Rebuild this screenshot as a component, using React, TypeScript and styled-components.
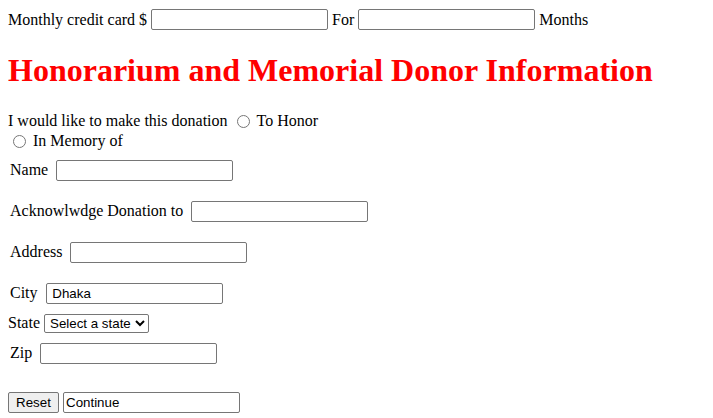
import React from 'react'
import styled, { createGlobalStyle } from 'styled-components'

const GlobalStyle = createGlobalStyle`
  body {
    margin: 8px;
    font-family: "Liberation Serif", "Times New Roman", serif;
    font-size: 16px;
    color: #000;
    background: #fff;
  }
`

// prvy riadok s kartou
const TopLine = styled.div`
  display: flex;
  align-items: center;
  height: 23px;
  gap: 4px;
  white-space: nowrap;
`

const Title = styled.h1`
  margin: 21.44px 0;
  font-size: 32px;
  font-weight: bold;
  color: #ff0000;
  line-height: 37px;
`

const RadioBlock = styled.div`
  line-height: 20px;
`

const RadioLine = styled.div`
  display: flex;
  align-items: center;
  height: 20px;
  white-space: nowrap;
`

interface RadioProps {
  $left: number;
}

const Radio = styled.input.attrs({ type: 'radio' })<RadioProps>`
  width: 13px;
  height: 13px;
  margin: 1px 7px 0 ${p => p.$left}px;
  accent-color: #767676;
`

interface FieldProps {
  $top: number;
  $indent?: number;
  $gap?: number;
}

const Field = styled.div<FieldProps>`
  display: flex;
  align-items: center;
  height: 25px;
  margin-top: ${p => p.$top}px;
  padding-left: ${p => p.$indent ?? 2}px;
  gap: ${p => p.$gap ?? 8}px;
  white-space: nowrap;
`

const TextInput = styled.input.attrs({ type: 'text' })`
  box-sizing: border-box;
  width: 177px;
  height: 21px;
  margin: 0;
  padding: 1px 2px;
  border: 1px solid #767676;
  border-radius: 2px;
  font-family: "Liberation Sans", Arial, sans-serif;
  font-size: 13.33px;
  color: #000;
  background: #fff;
`

const StateSelect = styled.select`
  box-sizing: border-box;
  width: 105px;
  height: 19px;
  margin: 0;
  padding: 0 0 0 1px;
  border: 1px solid #767676;
  border-radius: 2px;
  font-family: "Liberation Sans", Arial, sans-serif;
  font-size: 13.33px;
  color: #000;
  background: #fff;
`

const Buttons = styled.div`
  display: flex;
  align-items: center;
  gap: 4px;
  height: 25px;
  margin-top: 24px;
`

const ResetButton = styled.button`
  box-sizing: border-box;
  width: 51px;
  height: 21px;
  margin: 0;
  padding: 1px 6px;
  border: 1px solid #767676;
  border-radius: 2px;
  background: #efefef;
  font-family: "Liberation Sans", Arial, sans-serif;
  font-size: 13.33px;
  color: #000;
`

const App: React.FC = () => {
  return (
    <>
      <GlobalStyle />
      <form onSubmit={e => e.preventDefault()}>
        <TopLine>
          Monthly credit card $ <TextInput name="monthly" /> For <TextInput name="months" /> Months
        </TopLine>

        <Title>Honorarium and Memorial Donor Information</Title>

        <RadioBlock>
          <RadioLine>
            I would like to make this donation
            <Radio name="kind" value="honor" $left={9} />
            To Honor
          </RadioLine>
          <RadioLine>
            <Radio name="kind" value="memory" $left={5} />
            In Memory of
          </RadioLine>
        </RadioBlock>

        <Field $top={7}>
          Name <TextInput name="name" />
        </Field>
        <Field $top={16}>
          Acknowlwdge Donation to <TextInput name="ack" />
        </Field>
        <Field $top={16}>
          Address <TextInput name="address" />
        </Field>
        <Field $top={16}>
          City <TextInput name="city" defaultValue=" Dhaka" />
        </Field>
        <Field $top={5} $indent={0} $gap={4}>
          State
          <StateSelect name="state" defaultValue="">
            <option value="">Select a state</option>
            <option value="dhaka">Dhaka</option>
            <option value="chittagong">Chittagong</option>
          </StateSelect>
        </Field>
        <Field $top={5}>
          Zip <TextInput name="zip" />
        </Field>

        <Buttons>
          <ResetButton type="reset">Reset</ResetButton>
          <TextInput name="continue" defaultValue="Continue" />
        </Buttons>
      </form>
    </>
  )
}

export default App
